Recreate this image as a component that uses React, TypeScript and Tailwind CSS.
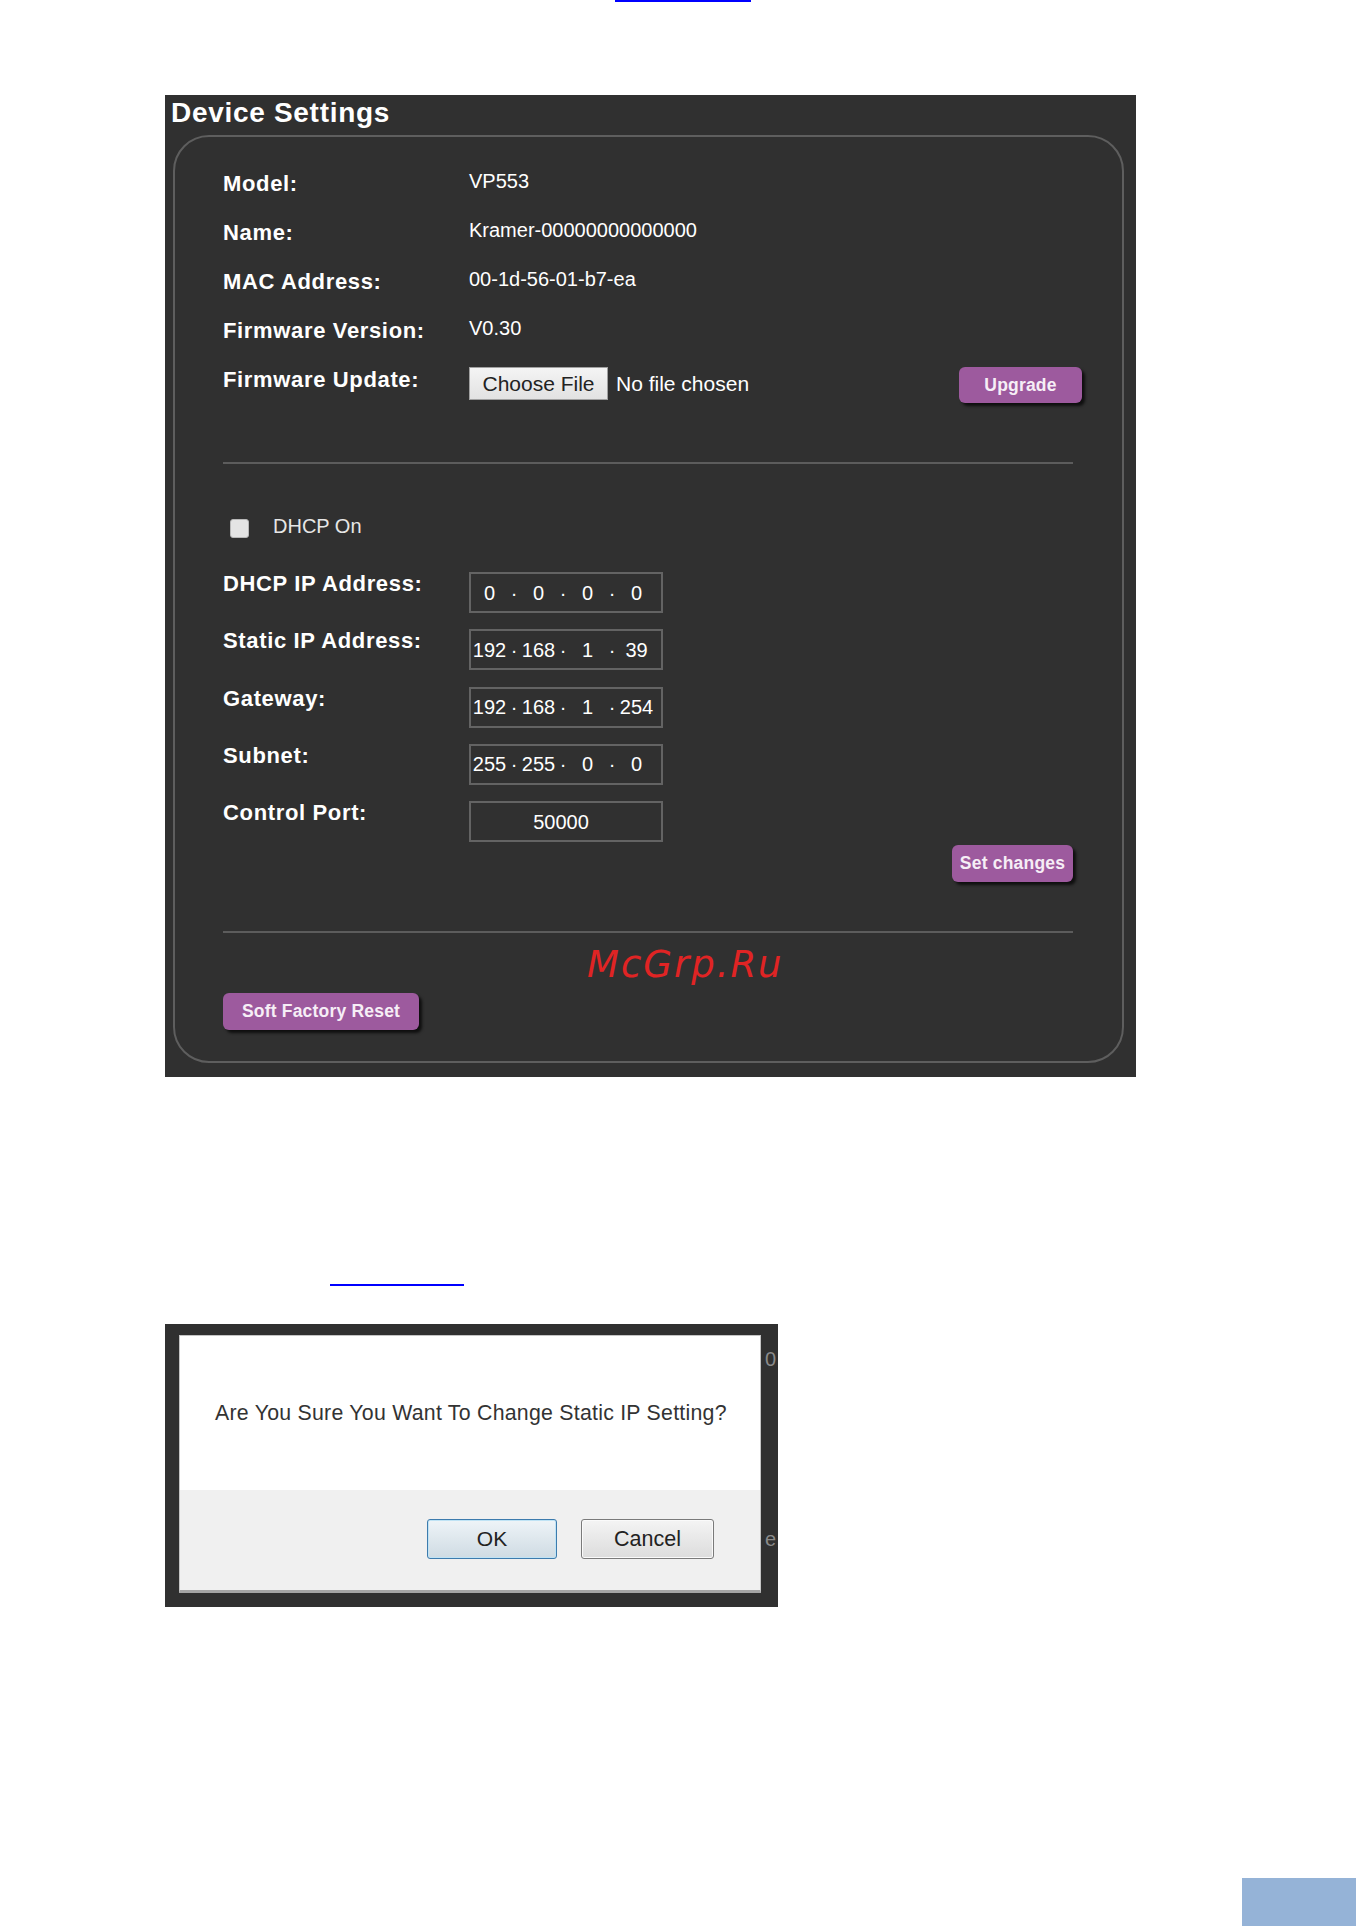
import React from 'react';

const infoRows = [
  { label: 'Model:', value: 'VP553' },
  { label: 'Name:', value: 'Kramer-00000000000000' },
  { label: 'MAC Address:', value: '00-1d-56-01-b7-ea' },
  { label: 'Firmware Version:', value: 'V0.30' },
];

const ipRows = [
  { label: 'DHCP IP Address:', parts: ['0', '0', '0', '0'] },
  { label: 'Static IP Address:', parts: ['192', '168', '1', '39'] },
  { label: 'Gateway:', parts: ['192', '168', '1', '254'] },
  { label: 'Subnet:', parts: ['255', '255', '0', '0'] },
];

function PurpleButton({ children, className }: { children: React.ReactNode; className: string }) {
  return (
    <button
      className={`flex items-center justify-center rounded-[6px] bg-[#9d5a9e] text-[17.5px] font-bold tracking-[0.2px] text-[#f6eef6] shadow-[3px_3px_3px_rgba(0,0,0,0.7)] ${className}`}
    >
      {children}
    </button>
  );
}

function IpBox({ parts }: { parts: string[] }) {
  return (
    <div className="flex h-[41px] w-[194px] items-center border-2 border-[#636363] text-[20px] leading-[20px] text-white">
      {parts.map((p, i) => (
        <React.Fragment key={i}>
          {i > 0 && <span className="w-[12px] text-center">·</span>}
          <span className="w-[37px] text-center">{p}</span>
        </React.Fragment>
      ))}
    </div>
  );
}

export default function App() {
  return (
    <div className="relative h-[1926px] w-full overflow-hidden bg-white font-['Liberation_Sans',Arial,sans-serif]">
      {/* link underline at top */}
      <div className="ml-[615px] h-[2px] w-[136px] bg-[#0000ff]" />

      {/* Device settings panel */}
      <div className="ml-[165px] mt-[93px] h-[982px] w-[971px] bg-[#303030]">
        <div className="ml-[6px] pt-[2px] text-[28px] font-bold leading-[32px] tracking-[0.7px] text-white">Device Settings</div>

        <div className="relative ml-[8px] mt-[6px] h-[928px] w-[951px] rounded-[36px] border-2 border-[#5e5e5e] pl-[48px] pr-[49px] pt-[30px]">
          {infoRows.map(r => (
            <div key={r.label} className="flex h-[49px] items-start">
              <div className="mt-[3px] w-[246px] text-[22px] font-bold leading-[28px] tracking-[0.65px] text-white">{r.label}</div>
              <div className="text-[20px] leading-[28px] text-white">{r.value}</div>
            </div>
          ))}

          {/* Firmware update */}
          <div className="flex h-[49px] items-start">
            <div className="mt-[3px] w-[246px] text-[22px] font-bold leading-[28px] tracking-[0.65px] text-white">Firmware Update:</div>
            <button className="mt-[4px] h-[33px] w-[139px] border border-[#a0a0a0] bg-gradient-to-b from-[#f4f4f4] to-[#e2e2e2] text-[21px] leading-[31px] text-[#222]">
              Choose File
            </button>
            <span className="ml-[8px] mt-[4px] text-[21px] leading-[33px] text-white">No file chosen</span>
            <PurpleButton className="ml-auto mr-[-9px] mt-[4px] h-[36px] w-[123px]">Upgrade</PurpleButton>
          </div>

          <div className="mt-[50px] h-[2px] bg-[#5c5c5c]" />

          {/* DHCP */}
          <div className="mt-[50px] flex items-start">
            <div className="ml-[7px] mt-[5px] h-[19px] w-[19px] rounded-[3px] border border-[#b8b8b8] bg-[#e4e4e4]" />
            <span className="ml-[24px] text-[20px] leading-[24px] text-[#e6e6e6]">DHCP On</span>
          </div>

          <div className="mt-[34px] flex flex-col gap-[16.25px]">
            {ipRows.map(r => (
              <div key={r.label} className="flex items-start">
                <div className="w-[246px] text-[22px] font-bold leading-[24px] tracking-[0.65px] text-white">{r.label}</div>
                <IpBox parts={r.parts} />
              </div>
            ))}
            <div className="flex items-start">
              <div className="w-[246px] text-[22px] font-bold leading-[24px] tracking-[0.65px] text-white">Control Port:</div>
              <div className="flex h-[41px] w-[194px] items-center justify-center border-2 border-[#636363] pr-[10px] text-[20px] leading-[20px] text-white">
                50000
              </div>
            </div>
          </div>

          <div className="mt-[3px] flex justify-end">
            <PurpleButton className="h-[37px] w-[121px]">Set changes</PurpleButton>
          </div>

          <div className="mt-[49px] h-[2px] bg-[#5c5c5c]" />

          <PurpleButton className="mt-[60px] h-[37px] w-[196px]">Soft Factory Reset</PurpleButton>

          {/* watermark */}
          <div className="absolute left-[412px] top-[806px] font-['DejaVu_Sans',sans-serif] text-[37px] italic leading-[43px] tracking-[2px] text-[#e02424]">
            McGrp.Ru
          </div>
        </div>
      </div>

      {/* second link underline */}
      <div className="ml-[330px] mt-[207px] h-[2px] w-[134px] bg-[#0000ff]" />

      {/* confirmation dialog */}
      <div className="ml-[165px] mt-[38px] flex h-[283px] w-[613px] bg-[#303030]">
        <div className="ml-[14px] mt-[11px] flex h-[258px] w-[582px] flex-col border border-b-[3px] border-[#c4c4c4] border-b-[#a4a4a4] bg-white">
          <div className="h-[154px] pl-[35px] pt-[65px] text-[21.3px] leading-[24px] tracking-[0.25px] text-[#333]">
            Are You Sure You Want To Change Static IP Setting?
          </div>
          <div className="flex flex-1 justify-end gap-[24px] bg-[#f0f0f0] pr-[46px] pt-[29px]">
            <button className="h-[40px] w-[130px] rounded-[3px] border border-[#3d7bad] bg-gradient-to-b from-[#eef4f8] to-[#cfdbe3] text-[21px] text-[#222] shadow-[inset_0_0_0_1px_#bfe3f5]">
              OK
            </button>
            <button className="h-[40px] w-[133px] rounded-[3px] border border-[#7a7a7a] bg-gradient-to-b from-[#f4f4f4] to-[#dcdcdc] text-[21.5px] text-[#222] shadow-[inset_0_0_0_1px_#fafafa]">
              Cancel
            </button>
          </div>
        </div>
        <div className="ml-[4px] flex w-[13px] flex-col overflow-hidden text-[20px] leading-[20px] text-[#8a8a8a]">
          <span className="mt-[25px]">0</span>
          <span className="mt-[160px]">e</span>
        </div>
      </div>

      {/* page corner block */}
      <div className="ml-auto mt-[271px] h-[48px] w-[114px] bg-[#95b3d7]" />
    </div>
  );
}
